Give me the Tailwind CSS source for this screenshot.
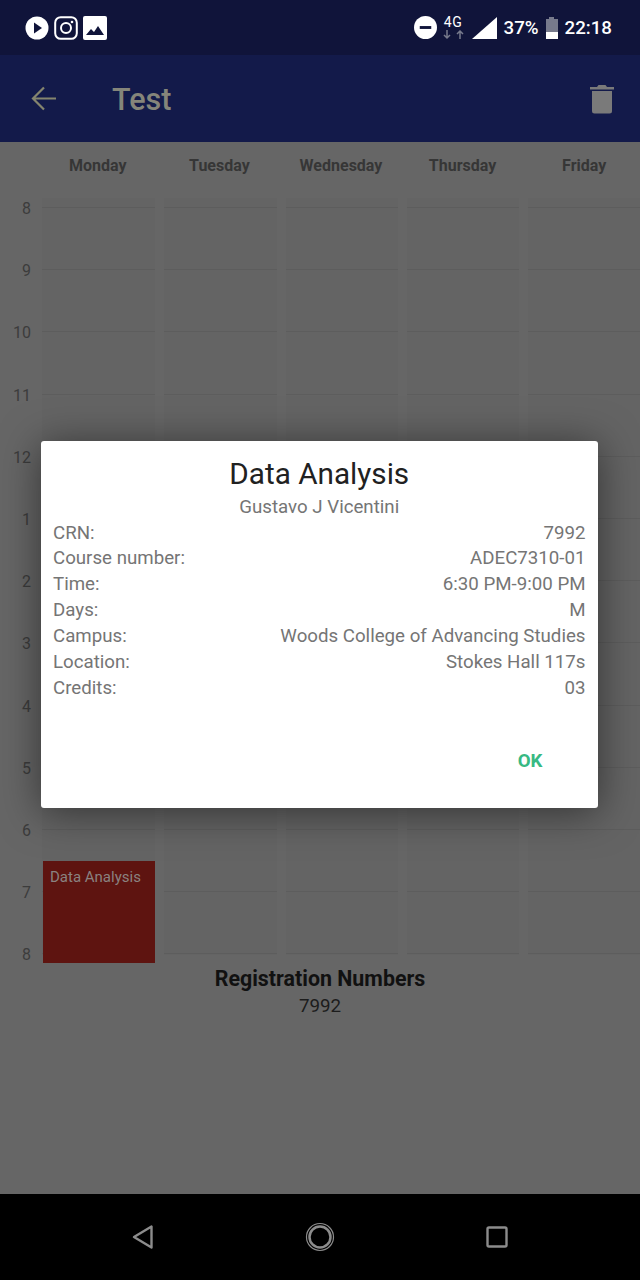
<!DOCTYPE html>
<html lang="en">

<head>
  <meta charset="UTF-8">
  <meta name="viewport" content="width=device-width, initial-scale=1.0">
  <script src="https://cdn.jsdelivr.net/npm/@tailwindcss/browser@4"></script>
  <title>Schedule</title>
</head>

<body class="bg-[#666666] font-['Roboto',sans-serif]">
  <div class="relative w-[640px] h-[1280px] flex flex-col overflow-hidden">

    <!-- status bar -->
    <div class="h-[55px] shrink-0 bg-[#10143a] flex items-center pl-[25px] pr-[28px] text-white">
      <svg class="w-[24px] h-[24px]" viewBox="0 0 24 24"><circle cx="12" cy="12" r="11.5" fill="#fff"/><path d="M9 6.5 17 12l-8 5.5z" fill="#10143a"/></svg>
      <svg class="w-[24px] h-[24px] ml-[5px]" viewBox="0 0 24 24"><rect x="1.2" y="1.2" width="21.6" height="21.6" rx="5.5" fill="none" stroke="#fff" stroke-width="2"/><circle cx="12" cy="12" r="5" fill="none" stroke="#fff" stroke-width="2"/><circle cx="18" cy="6" r="1.3" fill="#fff"/></svg>
      <svg class="w-[24px] h-[24px] ml-[5px]" viewBox="0 0 24 24"><rect width="24" height="24" rx="2" fill="#fff"/><path d="M3 19l5-6 3 3 4-6 6 9z" fill="#10143a"/></svg>
      <svg class="w-[23px] h-[23px] ml-auto" viewBox="0 0 24 24"><circle cx="12" cy="12" r="12" fill="#fff"/><rect x="6" y="10.5" width="12" height="3" fill="#10143a"/></svg>
      <div class="ml-[6px] w-[21px] flex flex-col items-center">
        <span class="text-[14px] leading-[13px] tracking-[0.5px]">4G</span>
        <svg class="w-[21px] h-[10px] mt-[1px]" viewBox="0 0 21 10"><path d="M4 0v8M1 5 4 8l3-3" fill="none" stroke="#777a8c" stroke-width="1.500"/><path d="M17 9V1M14 4l3-3 3 3" fill="none" stroke="#777a8c" stroke-width="1.500"/></svg>
      </div>
      <svg class="w-[25px] h-[22px] ml-[8px]" viewBox="0 0 25 22"><path d="M0 22 25 0v22z" fill="#fff"/></svg>
      <span class="ml-[7px] text-[18.7px] leading-[24px] font-medium">37%</span>
      <div class="ml-[7px] w-[12px] h-[22px] flex flex-col items-center">
        <div class="w-[5px] h-[2px] bg-[#777a8c]"></div>
        <div class="w-[12px] h-[13px] bg-[#777a8c]"></div>
        <div class="w-[12px] h-[7px] bg-white"></div>
      </div>
      <span class="ml-[7px] text-[18.7px] leading-[24px] font-medium">22:18</span>
    </div>

    <!-- app bar -->
    <div class="h-[87px] shrink-0 bg-[#131a4a] flex items-center pl-[31px] pr-[26px] text-[#85857a]">
      <svg class="w-[25px] h-[25px]" viewBox="0 0 25 25"><path d="M25 12.500H2M13 1.500 2 12.500l11 11" fill="none" stroke="#85856e" stroke-width="2.200"/></svg>
      <span class="ml-[56px] mt-[2px] text-[30.500px] leading-[36px] font-medium">Test</span>
      <svg class="w-[24px] h-[30px] ml-auto" viewBox="0 0 24 30"><path d="M2 7h20v20a2.500 2.500 0 0 1-2.500 2.500h-15A2.500 2.500 0 0 1 2 27z" fill="#7a7a7a"/><path d="M0 3h7l1.500-2h7L17 3h7v2.500H0z" fill="#7a7a7a"/></svg>
    </div>

    <!-- timetable -->
    <div class="flex-1 flex flex-col">
      <div class="h-[46px] shrink-0 pl-[37px] pt-[2px] flex items-center text-[16px] font-bold text-[#363636]">
        <span class="w-[121.6px] shrink-0 text-center">Monday</span>
        <span class="w-[121.6px] shrink-0 text-center">Tuesday</span>
        <span class="w-[121.6px] shrink-0 text-center">Wednesday</span>
        <span class="w-[121.6px] shrink-0 text-center">Thursday</span>
        <span class="w-[121.6px] shrink-0 text-center">Friday</span>
      </div>

      <div class="flex h-[775px]">
        <div class="w-[42px] shrink-0 flex flex-col text-[16px] leading-[20px] text-[#3c3c3c] pt-[11px]">
          <div class="h-[62.2px] shrink-0 pl-[12px]"><span class="block w-[19px] text-right">8</span></div>
          <div class="h-[62.2px] shrink-0 pl-[12px]"><span class="block w-[19px] text-right">9</span></div>
          <div class="h-[62.2px] shrink-0 pl-[12px]"><span class="block w-[19px] text-right">10</span></div>
          <div class="h-[62.2px] shrink-0 pl-[12px]"><span class="block w-[19px] text-right">11</span></div>
          <div class="h-[62.2px] shrink-0 pl-[12px]"><span class="block w-[19px] text-right">12</span></div>
          <div class="h-[62.2px] shrink-0 pl-[12px]"><span class="block w-[19px] text-right">1</span></div>
          <div class="h-[62.2px] shrink-0 pl-[12px]"><span class="block w-[19px] text-right">2</span></div>
          <div class="h-[62.2px] shrink-0 pl-[12px]"><span class="block w-[19px] text-right">3</span></div>
          <div class="h-[62.2px] shrink-0 pl-[12px]"><span class="block w-[19px] text-right">4</span></div>
          <div class="h-[62.2px] shrink-0 pl-[12px]"><span class="block w-[19px] text-right">5</span></div>
          <div class="h-[62.2px] shrink-0 pl-[12px]"><span class="block w-[19px] text-right">6</span></div>
          <div class="h-[62.2px] shrink-0 pl-[12px]"><span class="block w-[19px] text-right">7</span></div>
          <div class="h-[20px] shrink-0 pl-[12px]"><span class="block w-[19px] text-right">8</span></div>
        </div>
        <div class="relative flex-1 flex gap-[9px] pt-[10px]">
          <!-- lines -->
          <div class="w-[113px] shrink-0 h-[757px] bg-[repeating-linear-gradient(#646464_0,#646464_9px,#5d5d5d_9px,#5d5d5d_10px,#646464_10px,#646464_62.2px)]"></div>
          <div class="w-[113px] shrink-0 h-[757px] bg-[repeating-linear-gradient(#646464_0,#646464_9px,#5d5d5d_9px,#5d5d5d_10px,#646464_10px,#646464_62.2px)]"></div>
          <div class="w-[112px] shrink-0 h-[757px] bg-[repeating-linear-gradient(#646464_0,#646464_9px,#5d5d5d_9px,#5d5d5d_10px,#646464_10px,#646464_62.2px)]"></div>
          <div class="w-[112px] shrink-0 h-[757px] bg-[repeating-linear-gradient(#646464_0,#646464_9px,#5d5d5d_9px,#5d5d5d_10px,#646464_10px,#646464_62.2px)]"></div>
          <div class="w-[112px] shrink-0 h-[757px] bg-[repeating-linear-gradient(#646464_0,#646464_9px,#5d5d5d_9px,#5d5d5d_10px,#646464_10px,#646464_62.2px)]"></div>
          <!-- course block -->
          <div class="absolute left-[1px] top-[673px] w-[112px] h-[102px] bg-[#5e1410] text-[#8a8280] text-[15px] leading-[20px] pl-[7px] pt-[6px]">Data Analysis</div>
        </div>
      </div>

      <div class="text-center text-[#111111] mt-[2px]">
        <div class="text-[21.400px] leading-[28px] font-bold">Registration Numbers</div>
        <div class="text-[18.800px] leading-[27px] text-[#1c1c1c]">7992</div>
      </div>
    </div>

    <!-- nav bar -->
    <div class="h-[86px] shrink-0 bg-black flex items-center justify-between pl-[131px] pr-[131px]">
      <svg class="w-[24px] h-[26px]" viewBox="0 0 24 26"><path d="M20.500 2.500v21L3 13z" fill="none" stroke="#8c8c8c" stroke-width="2.400" stroke-linejoin="round"/></svg>
      <svg class="w-[30px] h-[30px]" viewBox="0 0 30 30"><circle cx="15" cy="15" r="13.500" fill="none" stroke="#8c8c8c" stroke-width="1.200"/><circle cx="15" cy="15" r="10.500" fill="none" stroke="#8c8c8c" stroke-width="2.500"/></svg>
      <svg class="w-[24px] h-[24px]" viewBox="0 0 24 24"><rect x="2.500" y="2.500" width="19" height="19" rx="1.500" fill="none" stroke="#8c8c8c" stroke-width="2.400"/></svg>
    </div>

    <!-- dialog -->
    <div class="absolute left-[41px] top-[441px] w-[557px] h-[367px] bg-white rounded-[3px] shadow-[0_4px_40px_rgba(0,0,0,0.5)] pl-[12px] pr-[12.500px] pt-[16px] flex flex-col">
      <div class="text-center text-[29.700px] leading-[34px] text-[#212121]">Data Analysis</div>
      <div class="text-center text-[18.700px] leading-[26px] mt-[3px] text-[#757575]">Gustavo J Vicentini</div>
      <div class="text-[18.700px] leading-[25.85px] mt-[0.5px] text-[#757575]">
        <div class="flex justify-between"><span>CRN:</span><span>7992</span></div>
        <div class="flex justify-between"><span>Course number:</span><span>ADEC7310-01</span></div>
        <div class="flex justify-between"><span>Time:</span><span>6:30 PM-9:00 PM</span></div>
        <div class="flex justify-between"><span>Days:</span><span>M</span></div>
        <div class="flex justify-between"><span>Campus:</span><span>Woods College of Advancing Studies</span></div>
        <div class="flex justify-between"><span>Location:</span><span>Stokes Hall 117s</span></div>
        <div class="flex justify-between"><span>Credits:</span><span>03</span></div>
      </div>
      <div class="mt-auto mb-[34px] pr-[43px] text-right text-[18.700px] leading-[26px] font-bold text-[#38b983]">OK</div>
    </div>
  </div>
</body>

</html>
